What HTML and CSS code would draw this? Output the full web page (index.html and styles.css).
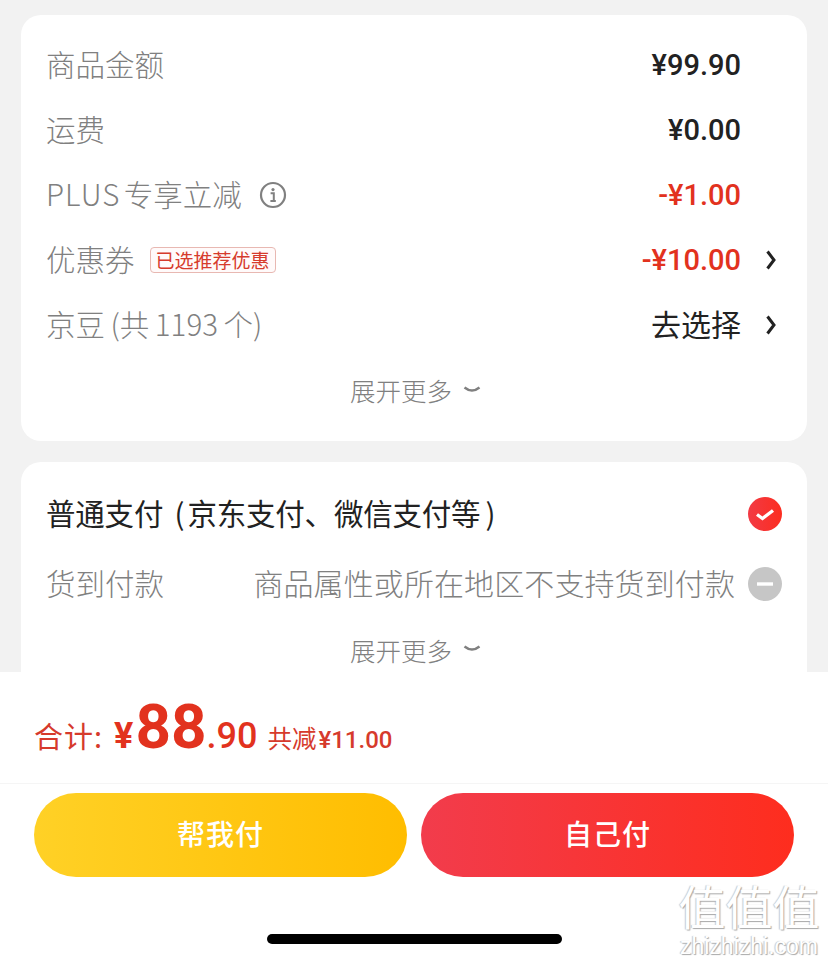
FILE: index.html
```html
<!DOCTYPE html>
<html>
<head>
<title>确认订单</title>
<link rel="stylesheet" href="styles.css">
</head>
<body>
    <div class="page">
        <div class="content">
            <div class="card">
                <div class="row">
                    <span class="label">商品金额</span>
                    <span class="amount">¥99.90</span>
                </div>
                <div class="row">
                    <span class="label">运费</span>
                    <span class="amount">¥0.00</span>
                </div>
                <div class="row">
                    <span class="label tight"><span class="plus">PLUS</span> 专享立减</span>
                    <svg class="info-icon" viewBox="0 0 28 28">
                        <circle cx="14" cy="14" r="12" fill="none" stroke="#808080" stroke-width="2.2"/>
                        <circle cx="14" cy="8.6" r="1.6" fill="#808080"/>
                        <path d="M11.6 12.2h3.2v7.6M11.4 20h5.4" fill="none" stroke="#808080" stroke-width="2"/>
                    </svg>
                    <span class="amount red">-¥1.00</span>
                </div>
                <div class="row">
                    <span class="label">优惠券</span>
                    <span class="tag">已选推荐优惠</span>
                    <span class="amount red with-arrow">-¥10.00</span>
                    <svg class="arrow" viewBox="0 0 12 20">
                        <path d="M2.5 1.500l6.500 8.500-6.500 8.500" fill="none" stroke="#222" stroke-width="3"/>
                    </svg>
                </div>
                <div class="row">
                    <span class="label beans">京豆 (共 1193 个)</span>
                    <span class="amount plain with-arrow">去选择</span>
                    <svg class="arrow" viewBox="0 0 12 20">
                        <path d="M2.5 1.500l6.500 8.500-6.500 8.500" fill="none" stroke="#222" stroke-width="3"/>
                    </svg>
                </div>
                <div class="more">
                    <span>展开更多</span>
                    <svg class="more-icon" viewBox="0 0 18 10">
                        <path d="M1.5 2.5q7.500 6 15 0" fill="none" stroke="#808080" stroke-width="2.4"/>
                    </svg>
                </div>
            </div>
            <div class="card card-pay">
                <div class="pay-row">
                    <span class="pay-name">普通支付 <span class="paren-open">(</span>京东支付、微信支付等<span class="paren-close">)</span></span>
                    <svg class="pay-icon" viewBox="0 0 34 34">
                        <defs>
                            <linearGradient id="checkFill" x1="0" y1="0" x2="1" y2="0">
                                <stop offset="0" stop-color="#f23a44"/>
                                <stop offset="1" stop-color="#fc2d20"/>
                            </linearGradient>
                        </defs>
                        <circle cx="17" cy="17" r="17" fill="url(#checkFill)"/>
                        <path d="M9 17.500l5.500 4 10.500-8" fill="none" stroke="#fff" stroke-width="3.400"/>
                    </svg>
                </div>
                <div class="pay-row">
                    <span class="label">货到付款</span>
                    <span class="pay-note">商品属性或所在地区不支持货到付款</span>
                    <svg class="pay-icon" viewBox="0 0 34 34">
                        <circle cx="17" cy="17" r="17" fill="#c6c6c6"/>
                        <path d="M9 17h16" fill="none" stroke="#fff" stroke-width="3.400"/>
                    </svg>
                </div>
                <div class="more more-pay">
                    <span>展开更多</span>
                    <svg class="more-icon" viewBox="0 0 18 10">
                        <path d="M1.5 2.5q7.500 6 15 0" fill="none" stroke="#808080" stroke-width="2.4"/>
                    </svg>
                </div>
            </div>
        </div>
        <div class="footer">
            <div class="total">
                <span class="total-label">合计:</span>
                <span class="total-yen">¥</span>
                <span class="total-int">88</span>
                <span class="total-dec">.90</span>
                <span class="total-save">共减</span>
                <span class="total-off">¥11.00</span>
            </div>
            <div class="actions">
                <button class="pay-btn yellow"><span>帮我付</span></button>
                <button class="pay-btn redbtn"><span>自己付</span></button>
            </div>
            <div class="home-bar"></div>
        </div>
        <div class="watermark">
            <div class="wm-logo">值值值</div>
            <div class="wm-url">zhizhizhi.com</div>
        </div>
    </div>
</body>
</html>
```

FILE: styles.css
```css
* {
    box-sizing: border-box;
}

body {
    margin: 0;
    padding: 0;
    font-family: "Noto Sans CJK SC", "Noto Sans", sans-serif;
}

.page {
    width: 828px;
    height: 961px;
    background-color: #f2f2f2;
    overflow: hidden;
    position: relative;
    display: flex;
    flex-direction: column;
}

.content {
    height: 672px;
    padding: 15px 21px 0;
    display: flex;
    flex-direction: column;
    gap: 21px;
    overflow: hidden;
}

.card {
    background-color: #ffffff;
    border-radius: 20px;
    height: 426px;
    padding: 17px 26px 0 25px;
    flex-shrink: 0;
}

.card-pay {
    height: 240px;
    padding-top: 17px;
}

.row {
    height: 65px;
    display: flex;
    align-items: center;
}

.label {
    padding-bottom: 4px;
    font-size: 29.5px;
    color: #808080;
    font-weight: 300;
}

.plus {
    letter-spacing: 1px;
}

.tight {
    word-spacing: -3px;
}

.beans {
    word-spacing: -1px;
}

.amount {
    margin-left: auto;
    margin-right: 40px;
    font-family: Roboto, "Noto Sans CJK SC", sans-serif;
    font-size: 29px;
    font-weight: 500;
    color: #222222;
}

.amount.red {
    color: #e2321e;
}

.amount.plain {
    padding-bottom: 4px;
    font-family: "Noto Sans CJK SC", sans-serif;
    font-size: 30px;
    font-weight: 400;
}

.amount.with-arrow {
    margin-right: 24px;
}

.arrow {
    width: 12px;
    height: 20px;
    margin-right: 4px;
}

.info-icon {
    width: 28px;
    height: 28px;
    margin-left: 17px;
}

.tag {
    margin-left: 15px;
    height: 26px;
    line-height: 24px;
    padding: 0 5px;
    font-size: 19px;
    color: #d63a2c;
    background-color: #fffafa;
    border: 1px solid #e8b8b2;
    border-radius: 4px;
}

.more {
    height: 65px;
    padding-left: 4px;
    display: flex;
    align-items: center;
    justify-content: center;
    gap: 11px;
    font-size: 25.5px;
    font-weight: 300;
    color: #808080;
}

.more-icon {
    width: 18px;
    height: 10px;
}

.more-pay {
    height: 60px;
}

.pay-row {
    height: 70px;
    display: flex;
    align-items: center;
}

.pay-name {
    padding-bottom: 4px;
    font-size: 29.5px;
    letter-spacing: -0.2px;
    color: #222222;
}

.paren-open {
    margin: 0 3px 0 5px;
}

.paren-close {
    margin-left: 5px;
}

.pay-note {
    margin-left: auto;
    margin-right: 13px;
    padding-bottom: 4px;
    font-size: 30px;
    letter-spacing: 0.1px;
    font-weight: 300;
    color: #808080;
}

.pay-icon {
    width: 34px;
    height: 34px;
    flex-shrink: 0;
    margin-left: auto;
    margin-right: -1px;
}

.pay-note + .pay-icon {
    margin-left: 0;
}

.footer {
    flex: 1;
    background-color: #ffffff;
    position: relative;
    display: flex;
    flex-direction: column;
}

.total {
    height: 112px;
    padding: 0 34px 4px;
    display: flex;
    align-items: baseline;
    border-bottom: 1px solid #f5f5f5;
    color: #e2321e;
    font-family: Roboto, "Noto Sans CJK SC", sans-serif;
    line-height: 110px;
}

.total-label {
    font-family: "Noto Sans CJK SC", sans-serif;
    font-size: 29px;
    letter-spacing: 1px;
    color: #d63a2c;
}

.total-yen {
    margin-left: 11px;
    font-size: 36px;
    font-weight: 700;
}

.total-int {
    margin-left: 2px;
    font-size: 62px;
    font-weight: 700;
}

.total-dec {
    font-size: 36px;
    font-weight: 500;
}

.total-save {
    margin-left: 10px;
    font-family: "Noto Sans CJK SC", sans-serif;
    font-size: 24.5px;
    color: #d63a2c;
}

.total-off {
    margin-left: 2px;
    font-size: 24px;
    font-weight: 500;
    color: #d63a2c;
}

.actions {
    padding: 9px 34px 0;
    display: flex;
    gap: 14px;
}

.pay-btn {
    flex: 1;
    height: 84px;
    border: none;
    border-radius: 42px;
    color: #ffffff;
    font-family: "Noto Sans CJK SC", sans-serif;
    font-size: 28px;
    font-weight: 500;
    letter-spacing: 1px;
}

.pay-btn span {
    display: block;
    padding-bottom: 4px;
}

.yellow {
    background: linear-gradient(90deg, #ffd126, #ffbd00);
}

.redbtn {
    background: linear-gradient(90deg, #f23c4c, #fe2d1e);
}

.home-bar {
    width: 295px;
    height: 10px;
    margin: 57px auto 0;
    background-color: #000000;
    border-radius: 5px;
}

.watermark {
    position: absolute;
    left: 676px;
    top: 878px;
    width: 146px;
    text-align: center;
    color: #ffffff;
    pointer-events: none;
}

.wm-logo {
    font-size: 47px;
    line-height: 54px;
    margin-bottom: 2px;
    text-shadow: 1px 1px 1px #a8a8a8, -1px 0 1px #c8c8c8;
}

.wm-url {
    font-family: "Liberation Sans", sans-serif;
    font-size: 23px;
    line-height: 24px;
    text-shadow: 1px 1px 1px #a8a8a8, -1px 0 1px #c8c8c8;
}
```
